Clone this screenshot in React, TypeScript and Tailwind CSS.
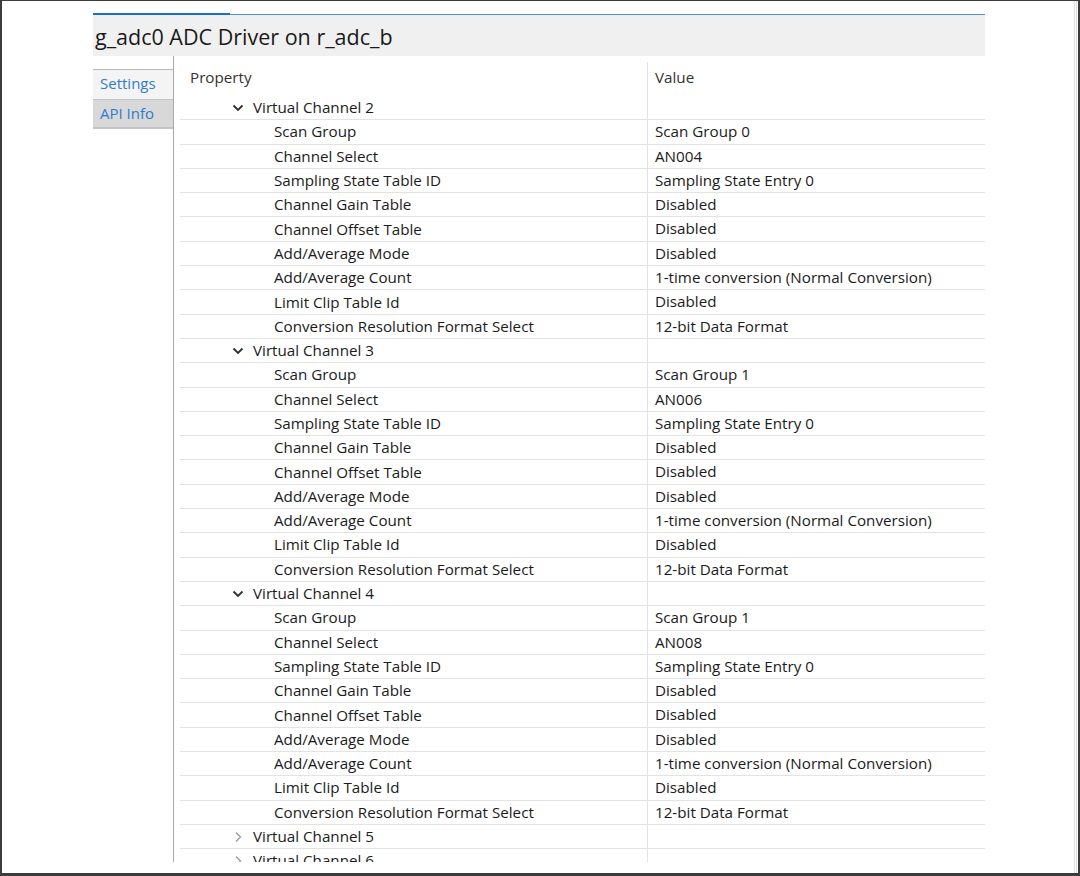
import React from "react";

type Row = { label: string; value?: string; group?: boolean; open?: boolean };

const channel = (n: number, group: string, an: string): Row[] => [
  { label: `Virtual Channel ${n}`, group: true, open: true },
  { label: "Scan Group", value: group },
  { label: "Channel Select", value: an },
  { label: "Sampling State Table ID", value: "Sampling State Entry 0" },
  { label: "Channel Gain Table", value: "Disabled" },
  { label: "Channel Offset Table", value: "Disabled" },
  { label: "Add/Average Mode", value: "Disabled" },
  { label: "Add/Average Count", value: "1-time conversion (Normal Conversion)" },
  { label: "Limit Clip Table Id", value: "Disabled" },
  { label: "Conversion Resolution Format Select", value: "12-bit Data Format" },
];

const rows: Row[] = [
  ...channel(2, "Scan Group 0", "AN004"),
  ...channel(3, "Scan Group 1", "AN006"),
  ...channel(4, "Scan Group 1", "AN008"),
  { label: "Virtual Channel 5", group: true, open: false },
  { label: "Virtual Channel 6", group: true, open: false },
];

function ChevronDown() {
  return (
    <svg width="12" height="8" viewBox="0 0 12 8" className="shrink-0">
      <path d="M1.5 1.5 L6 6 L10.5 1.5" fill="none" stroke="#2e2e2e" strokeWidth="1.8" />
    </svg>
  );
}

function ChevronRight() {
  return (
    <svg width="12" height="12" viewBox="0 0 12 12" className="shrink-0">
      <path d="M4 1.5 L8.5 6 L4 10.5" fill="none" stroke="#9a9a9a" strokeWidth="1.3" />
    </svg>
  );
}

export default function App() {
  return (
    <div
      className="w-[1080px] h-[876px] bg-white border-t border-l-2 border-r-2 border-b-[3px] border-[#3c3c3c] flex overflow-hidden text-[#1b1b1b]"
      style={{ fontFamily: '"Segoe UI", "Open Sans", "Noto Sans", sans-serif' }}
    >
      <div className="flex-1 pl-[91px] pt-[12px] pr-[89px] flex flex-col">
        {/* tab indicator line */}
        <div className="flex items-end h-[2px]">
          <div className="w-[137px] h-[2px] bg-[#1e6ec8]" />
          <div className="flex-1 h-[1px] bg-[#4d92d6]" />
        </div>
        {/* header */}
        <div className="h-[41px] bg-[#f0f0f0] flex items-center pl-[2px] pt-[3px]">
          <span className="text-[21.5px] font-medium text-[#1a1a1a]">g_adc0 ADC Driver on r_adc_b</span>
        </div>
        {/* body */}
        <div className="h-[806px] flex overflow-hidden">
          {/* tabs */}
          <div className="w-[81px] border-r border-[#a8a8a8] pt-[13px] shrink-0">
            <div className="h-[30px] bg-[#f4f4f4] border-t border-[#b8b8b8] flex items-center pl-[7px] pb-[2px] text-[15px] text-[#2f7bd0]">
              Settings
            </div>
            <div className="h-[30px] bg-[#d8d8d8] border-t border-b-2 border-[#c4c4c4] flex items-center pl-[7px] pb-[1px] text-[15px] text-[#2f7bd0]">
              API Info
            </div>
          </div>
          {/* table */}
          <div className="ml-[6px] flex-1 pt-[6px] text-[15.2px]">
            <div className="flex h-[34px]">
              <div className="w-[467px] pl-[10px] pt-[4px] text-[#333]">Property</div>
              <div className="flex-1 border-l border-[#e2e2e2] pl-[7px] pt-[4px] text-[#333]">Value</div>
            </div>
            {rows.map((r, i) => (
              <div key={i} className="flex h-[24.3px] border-b border-[#e3e3e3] leading-[23px]">
                <div className="w-[467px] shrink-0 flex items-center whitespace-nowrap">
                  {r.group ? (
                    <div className="pl-[52px] flex items-center gap-[9px]">
                      {r.open ? <ChevronDown /> : <ChevronRight />}
                      <span>{r.label}</span>
                    </div>
                  ) : (
                    <span className="pl-[94px]">{r.label}</span>
                  )}
                </div>
                <div className="flex-1 border-l border-[#e2e2e2] pl-[7px] whitespace-nowrap">{r.value ?? ""}</div>
              </div>
            ))}
          </div>
        </div>
      </div>
      <div className="w-[3px] mr-[1px] border-x border-[#dedede]" />
    </div>
  );
}
